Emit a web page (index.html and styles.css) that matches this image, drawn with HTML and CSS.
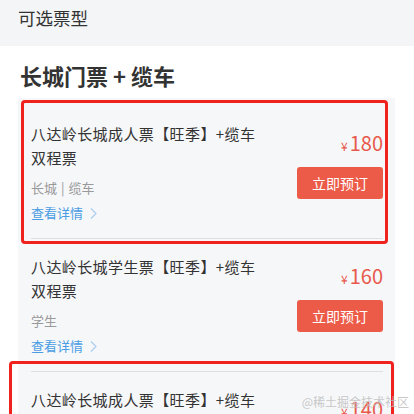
FILE: index.html
```html
<!DOCTYPE html>
<html lang="zh-CN">
<head>
<meta charset="utf-8">
<link rel="stylesheet" href="styles.css">
</head>
<body>
<div class="page">
  <header class="top-bar">可选票型</header>
  <section class="group">
    <h2 class="group-title">长城门票 + 缆车</h2>
    <div class="ticket-list">
      <div class="ticket">
        <div class="info">
          <div class="name">八达岭长城成人票【旺季】+缆车双程票</div>
          <div class="tags">长城<span class="sep">|</span>缆车</div>
          <a class="detail">查看详情<svg class="chev" width="7" height="11" viewBox="0 0 7 11"><polyline points="1,0.5 6,5.5 1,10.5" fill="none" stroke="#a9cdf0" stroke-width="1.1"/></svg></a>
        </div>
        <div class="buy">
          <div class="price"><span class="yen">¥</span>180</div>
          <button class="btn">立即预订</button>
        </div>
      </div>
      <div class="ticket">
        <div class="info">
          <div class="name">八达岭长城学生票【旺季】+缆车双程票</div>
          <div class="tags">学生</div>
          <a class="detail">查看详情<svg class="chev" width="7" height="11" viewBox="0 0 7 11"><polyline points="1,0.5 6,5.5 1,10.5" fill="none" stroke="#a9cdf0" stroke-width="1.1"/></svg></a>
        </div>
        <div class="buy">
          <div class="price"><span class="yen">¥</span>160</div>
          <button class="btn">立即预订</button>
        </div>
      </div>
      <div class="ticket">
        <div class="info">
          <div class="name">八达岭长城成人票【旺季】+缆车双程票</div>
          <div class="tags">长城<span class="sep">|</span>缆车</div>
          <a class="detail">查看详情<svg class="chev" width="7" height="11" viewBox="0 0 7 11"><polyline points="1,0.5 6,5.5 1,10.5" fill="none" stroke="#a9cdf0" stroke-width="1.1"/></svg></a>
        </div>
        <div class="buy">
          <div class="price"><span class="yen">¥</span>140</div>
          <button class="btn">立即预订</button>
        </div>
      </div>
    </div>
  </section>
  <div class="mark mark-1"></div>
  <div class="mark mark-3"></div>
  <div class="watermark">@稀土掘金技术社区</div>
</div>
</body>
</html>
```

FILE: styles.css
```css
* { box-sizing: border-box; }
html, body {
  margin: 0;
  padding: 0;
  background: #fff;
  font-family: "Noto Sans CJK SC", "Noto Sans", sans-serif;
  color: #333;
}
.page {
  position: relative;
  width: 414px;
  height: 414px;
  overflow: hidden;
}
.top-bar {
  background: #f4f5f7;
  height: 46px;
  padding: 6px 0 0 18px;
  font-size: 17.5px;
  line-height: 24px;
  color: #333;
}
.group {
  padding: 14px 0 0 18px;
}
.group-title {
  margin: 0 0 8px 2px;
  font-size: 22px;
  line-height: 30px;
  font-weight: 700;
  color: #333;
}
.ticket-list {
  width: 377px;
  background: #f6f7f9;
  padding-top: 8px;
}
.ticket {
  display: flex;
  justify-content: space-between;
  margin: 0 12px 0 13px;
  padding: 16px 0 15px;
  border-bottom: 1px solid #dedfe1;
}
.info {
  display: flex;
  flex-direction: column;
}
.name {
  width: 238px;
  font-size: 15px;
  letter-spacing: 0.4px;
  line-height: 24px;
  color: #333;
}
.tags {
  margin-top: 8px;
  font-size: 13px;
  line-height: 20px;
  color: #999;
}
.sep {
  margin: 0 4px;
}
.detail {
  margin-top: 5px;
  display: flex;
  align-items: center;
  gap: 7px;
  font-size: 13px;
  line-height: 20px;
  color: #4a9de4;
}
.buy {
  display: flex;
  flex-direction: column;
  align-items: flex-end;
  padding-top: 7px;
}
.price {
  font-size: 20px;
  line-height: 28px;
  color: #e8594c;
}
.yen {
  font-size: 12px;
  margin-right: 2px;
}
.btn {
  margin-top: 7px;
  width: 86px;
  height: 32px;
  border: 0;
  border-radius: 3px;
  background: #ec5a48;
  color: #fff;
  font-family: inherit;
  font-size: 14px;
  padding: 0;
}
.mark {
  position: absolute;
  border: 3px solid #f0221e;
  border-radius: 4px;
  pointer-events: none;
}
.mark-1 {
  left: 21px;
  top: 100px;
  width: 367px;
  height: 144px;
}
.mark-3 {
  left: 9px;
  top: 361px;
  width: 385px;
  height: 120px;
}
.watermark {
  position: absolute;
  right: 5px;
  top: 394px;
  font-size: 12px;
  line-height: 16px;
  color: rgba(190, 190, 190, 0.85);
}
```
